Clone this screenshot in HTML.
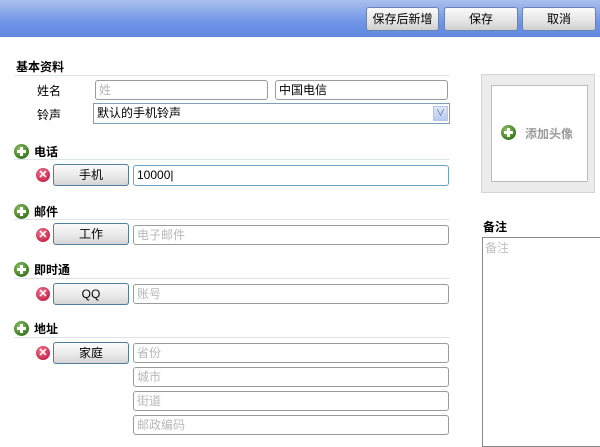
<!DOCTYPE html>
<html><head><meta charset="utf-8"><style>
*{box-sizing:border-box;margin:0;padding:0}
body{width:600px;height:438px;overflow:hidden;background:#fff;font-family:"Liberation Sans","Noto Sans CJK SC",sans-serif;font-size:12px;color:#000;position:relative}
.hdr{position:absolute;left:0;top:0;width:600px;height:37px;background:linear-gradient(#a9c0ee,#6f95e6 60%,#5f88e0)}
.btn{position:absolute;top:7px;height:24px;border:1px solid #6a84b0;border-radius:3px;background:linear-gradient(#fafafa,#e4e4e4 60%,#cfcfcf);text-align:center;line-height:22px;font-size:12px}
.a{position:absolute}
.t{position:absolute;font-weight:bold;font-size:12px}
.line{position:absolute;left:14px;width:436px;height:1px;background:#dde3ea}
.in{position:absolute;height:20px;border:1px solid #9a9a9a;border-radius:3px;background:#fff;padding-left:3px;line-height:18px;color:#b8b8b8}
.tb{position:absolute;left:53px;width:76px;height:22px;border:1px solid #4f7f9c;border-radius:3px;background:linear-gradient(#fbfbfb,#e8e8e8 60%,#d4d4d4);text-align:center;line-height:20px}
.plus{position:absolute;width:15px;height:15px;border-radius:50%;background:radial-gradient(circle at 40% 35%,#8fc46a,#3c7a1c 70%,#2e5e14)}
.plus:before{content:"";position:absolute;left:6px;top:3px;width:3px;height:9px;background:#fff}
.plus:after{content:"";position:absolute;left:3px;top:6px;width:9px;height:3px;background:#fff}
.x{position:absolute;left:36px;width:14px;height:14px;border-radius:50%;background:radial-gradient(circle at 40% 35%,#f07a92,#c8284d 70%,#9c1a38);color:#fff;font-weight:bold;font-size:11px;line-height:14px;text-align:center}
</style></head><body>
<div class="hdr"></div>
<div class="btn" style="left:366px;width:73px">保存后新增</div>
<div class="btn" style="left:444px;width:74px">保存</div>
<div class="btn" style="left:522px;width:74px">取消</div>

<div class="t" style="left:16px;top:58px">基本资料</div>
<div class="line" style="top:75px"></div>
<div class="a" style="left:37px;top:82px">姓名</div>
<div class="in" style="left:95px;top:80px;width:173px">姓</div>
<div class="in" style="left:275px;top:80px;width:173px;color:#000">中国电信</div>
<div class="a" style="left:37px;top:106px">铃声</div>
<div class="in" style="left:93px;top:103px;width:357px;height:21px;border-radius:0;border-color:#7f9db9;color:#000">默认的手机铃声</div>
<div class="a" style="left:433px;top:106px;width:15px;height:15px;background:linear-gradient(#dfe8fb,#b7c9f0);border:1px solid #b2c4ea;font-size:9px;color:#4d6185;text-align:center;line-height:13px">&#x2228;</div>

<div class="plus" style="left:14px;top:144px"></div>
<div class="t" style="left:34px;top:143px">电话</div>
<div class="line" style="top:159px"></div>
<div class="x" style="top:168px">✕</div>
<div class="tb" style="top:164px">手机</div>
<div class="in" style="left:133px;top:165px;width:316px;height:21px;border-color:#6aa3c8;color:#000">10000|</div>

<div class="plus" style="left:14px;top:204px"></div>
<div class="t" style="left:34px;top:203px">邮件</div>
<div class="line" style="top:219px"></div>
<div class="x" style="top:228px">✕</div>
<div class="tb" style="top:223px">工作</div>
<div class="in" style="left:133px;top:225px;width:316px">电子邮件</div>

<div class="plus" style="left:14px;top:262px"></div>
<div class="t" style="left:34px;top:261px">即时通</div>
<div class="line" style="top:278px"></div>
<div class="x" style="top:287px">✕</div>
<div class="tb" style="top:283px">QQ</div>
<div class="in" style="left:133px;top:284px;width:316px">账号</div>

<div class="plus" style="left:14px;top:321px"></div>
<div class="t" style="left:34px;top:320px">地址</div>
<div class="line" style="top:337px"></div>
<div class="x" style="top:346px">✕</div>
<div class="tb" style="top:342px">家庭</div>
<div class="in" style="left:133px;top:343px;width:316px">省份</div>
<div class="in" style="left:133px;top:367px;width:316px">城市</div>
<div class="in" style="left:133px;top:391px;width:316px">街道</div>
<div class="in" style="left:133px;top:415px;width:316px">邮政编码</div>

<div class="a" style="left:481px;top:74px;width:114px;height:119px;background:#ececec;border:1px solid #d4d4d4"></div>
<div class="a" style="left:491px;top:85px;width:97px;height:97px;background:#fff;border:1px solid #bcbcbc"></div>
<div class="plus" style="left:501px;top:125px"></div>
<div class="a" style="left:525px;top:125px;font-weight:bold;color:#9a9a9a">添加头像</div>

<div class="t" style="left:483px;top:218px">备注</div>
<div class="a" style="left:482px;top:237px;width:130px;height:210px;border:1px solid #8a8a8a;color:#c0c0c0;padding:1px 2px">备注</div>
</body></html>
